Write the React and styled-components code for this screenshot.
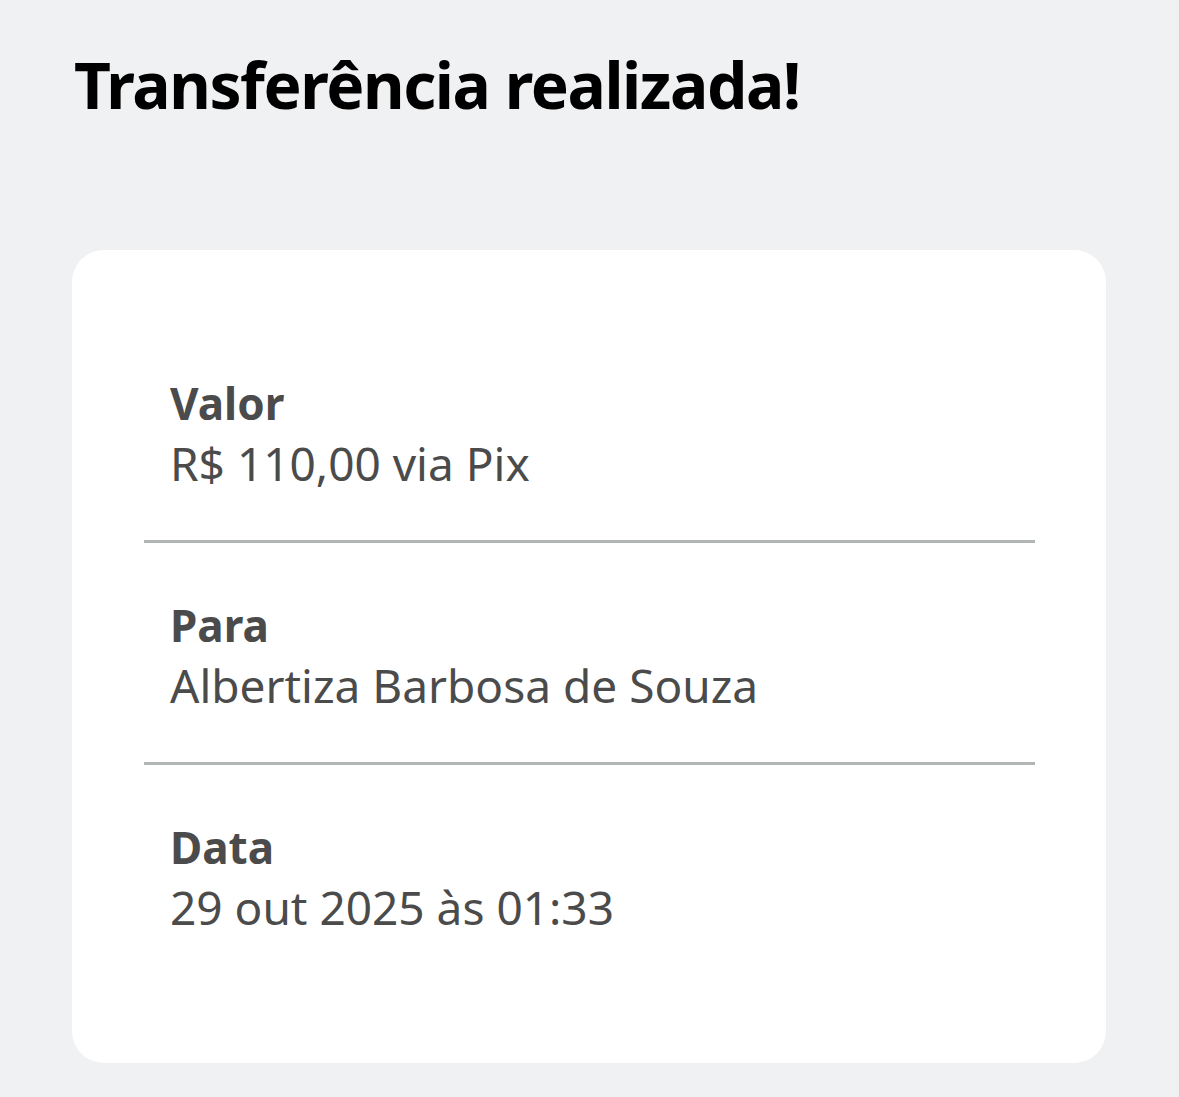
import React from 'react';
import styled, { createGlobalStyle } from 'styled-components';

const GlobalStyle = createGlobalStyle`
    html, body {
        margin: 0;
        padding: 0;
        background: #f0f1f3;
    }
    body {
        font-family: "Noto Sans", "Open Sans", sans-serif;
    }
`

const rows = [
    { label: 'Valor', value: 'R$ 110,00 via Pix' },
    { label: 'Para', value: 'Albertiza Barbosa de Souza' },
    { label: 'Data', value: '29 out 2025 às 01:33' },
];

export default function App() {
    return (
        <>
            <GlobalStyle />
            <Page>
                <Title>Transferência realizada!</Title>
                <Card>
                    {rows.map((row, i) => (
                        <Row key={row.label} last={i === rows.length - 1}>
                            <Label>{row.label}</Label>
                            <Value>{row.value}</Value>
                        </Row>
                    ))}
                </Card>
            </Page>
        </>
    )
}

const Page = styled.div`
    width: 1179px;
    height: 1097px;
    box-sizing: border-box;
    padding: 0 73px 0 72px;
    background: #f0f1f3;
    overflow: hidden;
`

const Title = styled.h1`
    margin: 0;
    padding: 43px 0 0 2px;
    height: 250px;
    box-sizing: border-box;
    font-size: 64px;
    line-height: 84px;
    font-weight: 700;
    letter-spacing: -1.4px;
    color: #000;
`

const Card = styled.div`
    background: #fff;
    border-radius: 32px;
    padding: 71px 71px 79px 72px;
`

const Row = styled.div`
    padding: 52px 0 47px 26px;
    border-bottom: ${p => p.last ? 'none' : '3px solid #b1b6b4'};
`

const Label = styled.div`
    font-size: 44px;
    line-height: 60px;
    font-weight: 700;
    color: #4b4b4b;
`

const Value = styled.div`
    font-size: 46px;
    line-height: 60px;
    font-weight: 400;
    color: #4b4b4b;
`
